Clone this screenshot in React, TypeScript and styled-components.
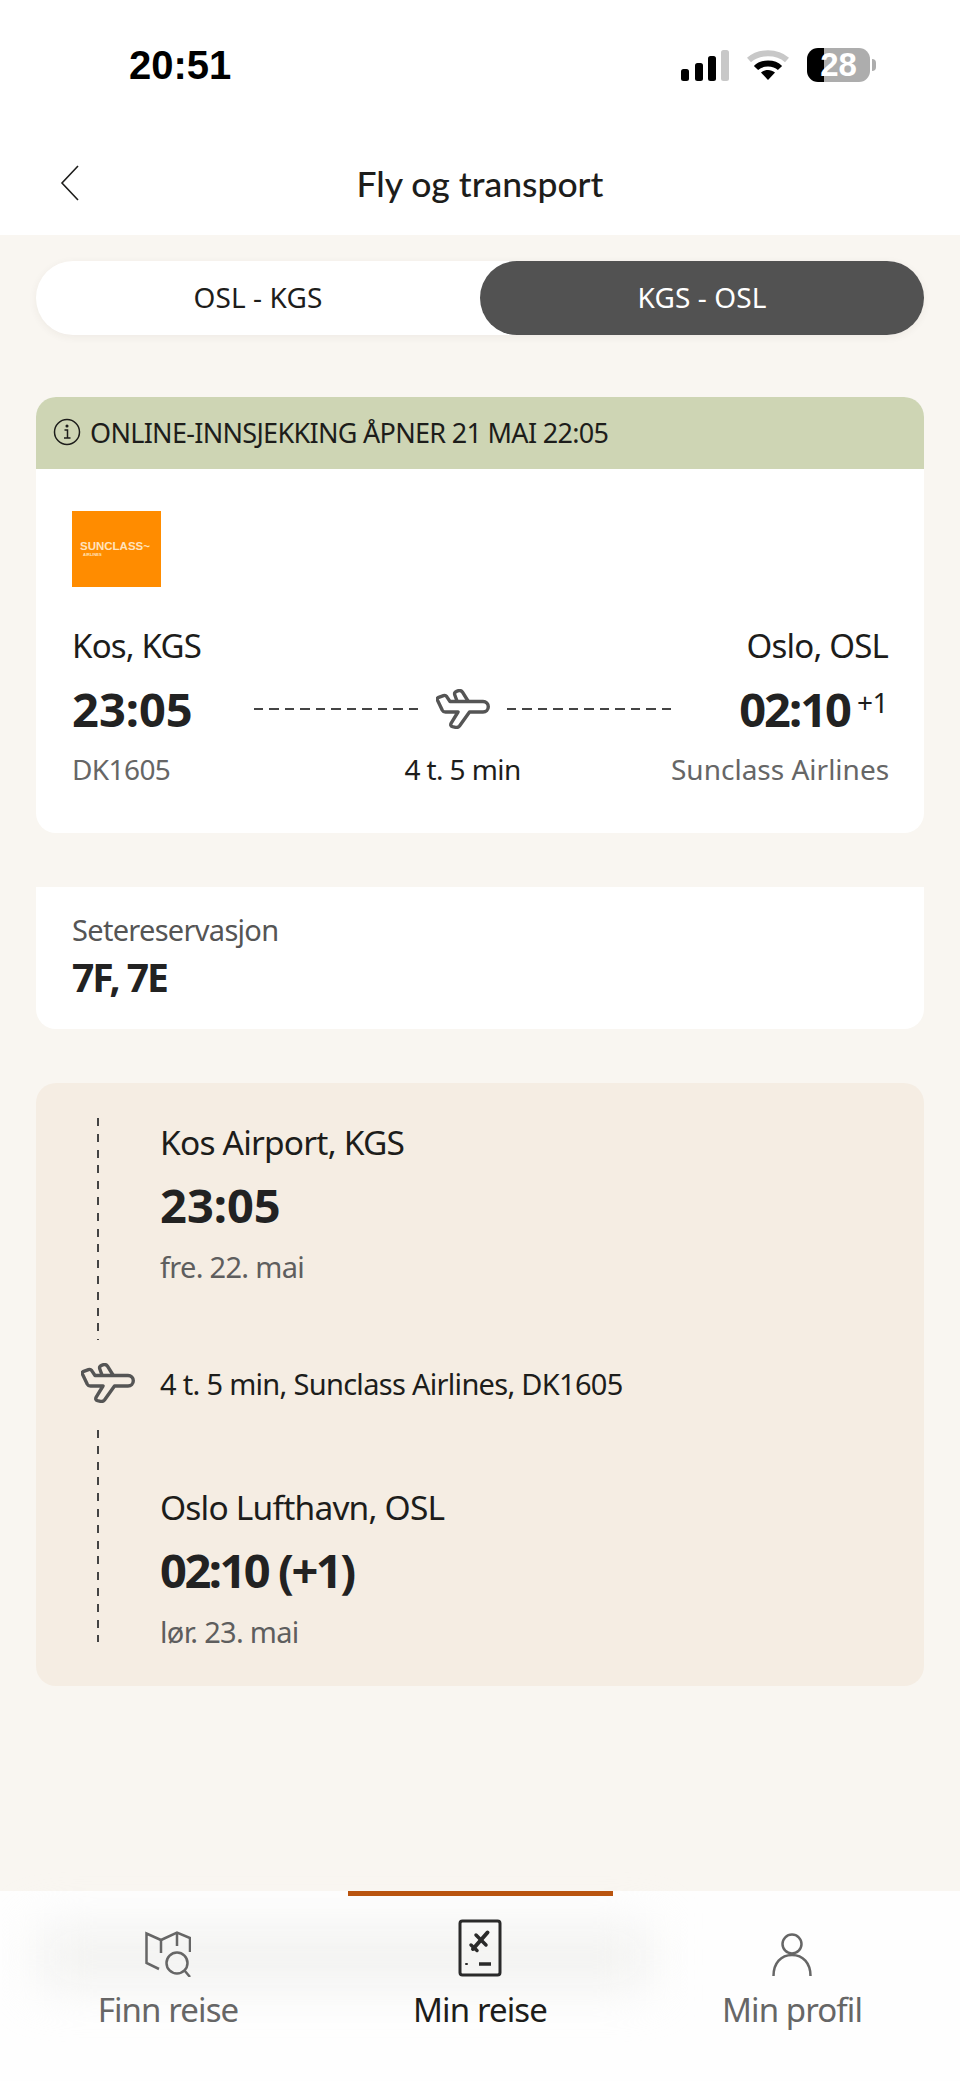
import React from "react";
import styled, { createGlobalStyle } from "styled-components";

const BODY_FONT = `"Noto Sans", "Open Sans", sans-serif`;
const TITLE_FONT = `Lato, "Noto Sans", sans-serif`;

const GlobalStyle = createGlobalStyle`
  html, body {
    margin: 0;
    padding: 0;
    background: #f9f6f1;
  }
  * {
    box-sizing: border-box;
  }
`;

const Page = styled.div`
  width: 960px;
  height: 2081px;
  display: flex;
  flex-direction: column;
  overflow: hidden;
  background: #f9f6f1;
  color: #1d1d1b;
  font-family: ${BODY_FONT};
`;

const Header = styled.header`
  height: 235px;
  flex: none;
  background: #fff;
`;

const StatusBar = styled.div`
  height: 130px;
  display: flex;
  align-items: center;
  justify-content: space-between;
  padding: 0 90px 0 129px;
`;

const Clock = styled.span`
  font-family: "Liberation Sans", Arial, sans-serif;
  font-size: 40px;
  font-weight: 700;
  color: #000;
`;

const StatusIcons = styled.div`
  display: flex;
  align-items: center;
  gap: 18px;
`;

const Battery = styled.div`
  position: relative;
  width: 63px;
  height: 34px;
  border-radius: 11px;
  background: linear-gradient(90deg, #000 17px, #adadad 17px);
  color: #fff;
  font-family: "Liberation Sans", Arial, sans-serif;
  font-size: 33px;
  font-weight: 700;
  line-height: 34px;
  text-align: center;
  &::after {
    content: "";
    position: absolute;
    right: -6px;
    top: 11px;
    width: 4px;
    height: 12px;
    border-radius: 0 4px 4px 0;
    background: #adadad;
  }
`;

const TitleRow = styled.div`
  height: 105px;
  display: flex;
  align-items: center;
  justify-content: center;
  position: relative;
  padding-top: 1px;
`;

const BackIcon = styled.svg`
  position: absolute;
  left: 60px;
  top: 35px;
`;

const Title = styled.h1`
  margin: 0;
  font-family: ${TITLE_FONT};
  font-size: 35.5px;
  font-weight: 500;
  color: #1d1d1b;
`;

const Main = styled.main`
  flex: 1;
  display: flex;
  flex-direction: column;
  padding: 26px 36px 0;
`;

const Tabs = styled.div`
  height: 74px;
  display: grid;
  grid-template-columns: 1fr 1fr;
  border-radius: 37px;
  background: #fff;
  box-shadow: 0 2px 8px rgba(60, 50, 30, 0.06);
  margin-bottom: 62px;
`;

const RouteTab = styled.div<{ $active?: boolean }>`
  display: flex;
  align-items: center;
  justify-content: center;
  border-radius: 37px;
  padding-bottom: 2px;
  font-size: 28px;
  letter-spacing: 0.1px;
  background: ${(p) => (p.$active ? "#525252" : "transparent")};
  color: ${(p) => (p.$active ? "#fff" : "#1d1d1b")};
`;

const Card = styled.section`
  background: #fff;
  border-radius: 20px;
  overflow: hidden;
  margin-bottom: 54px;
`;

const Banner = styled.div`
  height: 72px;
  display: flex;
  align-items: center;
  gap: 9px;
  padding: 0 0 2px 17px;
  background: #ced5b4;
  font-size: 27px;
  letter-spacing: -0.7px;
  color: #1d1d1b;
`;

const FlightBody = styled.div`
  padding: 42px 36px 42px;
`;

const Logo = styled.div`
  width: 89px;
  height: 76px;
  display: flex;
  flex-direction: column;
  justify-content: center;
  padding-left: 8px;
  background: #ff8c00;
  color: #ffe3bd;
  font-family: "Liberation Sans", Arial, sans-serif;
  font-weight: 700;
  margin-bottom: 35px;
`;

const LogoName = styled.span`
  font-size: 11.5px;
  line-height: 11px;
  white-space: nowrap;
`;

const LogoSub = styled.span`
  font-size: 4px;
  line-height: 5px;
  padding-left: 3px;
`;

const Cities = styled.div`
  display: flex;
  justify-content: space-between;
  font-size: 33px;
  line-height: 48px;
  letter-spacing: -0.8px;
  margin-bottom: 9px;
`;

const FlightGrid = styled.div`
  display: grid;
  grid-template-columns: 182px 417px 217px;
  row-gap: 8px;
`;

const BigTime = styled.span<{ $tight?: boolean }>`
  font-size: 47px;
  font-weight: 700;
  line-height: 60px;
  letter-spacing: ${(p) => (p.$tight ? "-2px" : "0")};
  color: #222;
`;

const Route = styled.div`
  display: flex;
  align-items: center;
  gap: 17px;
`;

const DashLine = styled.div`
  flex: 1;
  height: 2px;
  background: repeating-linear-gradient(90deg, #444 0 9px, transparent 9px 15.5px);
`;

const ArrivalCell = styled.div`
  display: flex;
  justify-content: flex-end;
  align-items: flex-start;
  gap: 7px;
`;

const PlusDay = styled.span`
  font-size: 28px;
  line-height: 46px;
  letter-spacing: -0.5px;
`;

const Meta = styled.div<{ $align?: string; $dark?: boolean; $loose?: boolean }>`
  font-size: 28px;
  line-height: 44px;
  letter-spacing: ${(p) => (p.$loose ? "0" : "-0.6px")};
  white-space: nowrap;
  text-align: ${(p) => p.$align || "left"};
  color: ${(p) => (p.$dark ? "#1d1d1b" : "#666")};
`;

const SeatCard = styled(Card)`
  padding: 23px 36px 25px;
  border-radius: 0 0 20px 20px;
`;

const SeatLabel = styled.div`
  font-size: 29px;
  line-height: 40px;
  letter-spacing: -0.7px;
  color: #555;
`;

const SeatValue = styled.div`
  font-size: 39px;
  font-weight: 700;
  line-height: 54px;
  letter-spacing: -2px;
  color: #222;
`;

const Timeline = styled.section`
  background: #f5ede3;
  border-radius: 20px;
  padding: 35px 0 31px;
`;

const Stop = styled.div`
  display: flex;
`;

const Rail = styled.div<{ $trim?: number }>`
  width: 124px;
  flex: none;
  margin-bottom: ${(p) => p.$trim || 0}px;
  background: repeating-linear-gradient(180deg, #444 0 8px, transparent 8px 15.8px) no-repeat 61px 0 / 2px 100%;
`;

const StopBody = styled.div<{ $top?: number; $bottom?: number }>`
  padding-top: ${(p) => p.$top || 0}px;
  padding-bottom: ${(p) => p.$bottom || 0}px;
`;

const StopName = styled.div`
  font-size: 33.5px;
  line-height: 48px;
  letter-spacing: -0.8px;
`;

const StopTime = styled.div<{ $tight?: boolean }>`
  font-size: 47px;
  font-weight: 700;
  line-height: 78px;
  letter-spacing: ${(p) => (p.$tight ? "-2.5px" : "0")};
  color: #222;
`;

const StopDate = styled.div`
  font-size: 29px;
  line-height: 46px;
  letter-spacing: -0.7px;
  color: #5e5e5e;
`;

const Leg = styled.div`
  height: 90px;
  display: flex;
  align-items: center;
  padding-bottom: 4px;
  font-size: 29px;
  letter-spacing: -0.7px;
`;

const LegIcon = styled.div`
  width: 124px;
  flex: none;
  display: flex;
  justify-content: flex-start;
  padding-left: 45px;
`;

const TabBar = styled.nav`
  position: relative;
  height: 190px;
  flex: none;
  display: grid;
  grid-template-columns: repeat(3, 1fr);
  padding: 0 12px;
  background: #fefefe;
`;

const BarShade = styled.div`
  position: absolute;
  left: 40px;
  top: 38px;
  width: 610px;
  height: 56px;
  background: #f1f1ef;
  filter: blur(24px);
`;

const NavItem = styled.div<{ $active?: boolean }>`
  position: relative;
  display: flex;
  flex-direction: column;
  align-items: center;
  font-size: 33px;
  letter-spacing: -0.9px;
  color: ${(p) => (p.$active ? "#1d1d1b" : "#666")};
`;

const Indicator = styled.div<{ $active?: boolean }>`
  width: 265px;
  height: 5px;
  background: ${(p) => (p.$active ? "#b9540f" : "transparent")};
`;

const NavIconBox = styled.div`
  height: 58px;
  margin-top: 23px;
  display: flex;
  align-items: flex-end;
`;

const NavLabel = styled.span`
  margin-top: 11px;
  line-height: 44px;
`;

const PlaneIcon = ({ width, color = "#555" }: { width: number; color?: string }) => (
  <svg width={width} height={(width * 40) / 54} viewBox="0 0 54 40" fill="none" stroke={color} strokeWidth="3.400" strokeLinejoin="round" strokeLinecap="round">
    <path d="M2 8.7 7.500 6.600c1.300-.5 2.400-.1 3.200 1L14 12.500h33c3 0 5.300 2.300 5.300 5.300S50 23 47 23H33.500L23.500 37c-1 1.300-2.300 1.700-4 1.300l-3-.7c-1.700-.5-2.200-1.800-1.300-3.400L22 23H9.500c-1.500 0-2.500-.5-3.200-1.800L1.500 11.300C1 10.200 1.100 9.200 2 8.700Z" />
    <path d="M21 12 18.800 6c-.6-1.700 0-3 1.700-3.600l2-.7c1.800-.5 3 0 4 1.500L32 12" />
  </svg>
);

const InfoIcon = () => (
  <svg width="28" height="28" viewBox="0 0 28 28" fill="none" stroke="#1d1d1b" strokeWidth="1.500">
    <circle cx="14" cy="14" r="12.500" />
    <path d="M11.500 12H14.500V20M11 20H17.500" />
    <circle cx="14" cy="8" r="0.800" fill="#1d1d1b" />
  </svg>
);

const MapSearchIcon = () => (
  <svg width="46" height="46" viewBox="0 0 46 46" fill="none" stroke="#666" strokeWidth="2.500">
    <path d="M14 38 1.500 32V2.500L16 9 32 1.500 45 7V21" />
    <path d="M16 9V22M32 1.500V15" />
    <circle cx="32" cy="32" r="10.500" />
    <path d="M39.500 39.500 45 46" />
  </svg>
);

const TripIcon = () => (
  <svg width="44" height="58" viewBox="0 0 44 58" fill="none" stroke="#2a2a2a">
    <rect x="2" y="2" width="40" height="54" rx="2.500" strokeWidth="3" />
    <path d="M29.500 13.500 15 30" strokeWidth="4" strokeLinecap="round" />
    <path d="M18 16 28 26M13 26 19 31.500" strokeWidth="3.500" strokeLinecap="round" />
    <path d="M8.500 44V46" strokeWidth="2.500" />
    <path d="M21 45H33" strokeWidth="3.500" />
  </svg>
);

const ProfileIcon = () => (
  <svg width="40" height="44" viewBox="0 0 40 44" fill="none" stroke="#666" strokeWidth="2.500">
    <circle cx="20" cy="11" r="9.500" />
    <path d="M1.500 43C1.500 30 9 22 20 22S38.500 30 38.500 43" />
  </svg>
);

export default function App() {
  return (
    <Page>
      <GlobalStyle />
      <Header>
        <StatusBar>
          <Clock>20:51</Clock>
          <StatusIcons>
            <svg width="48" height="32" viewBox="0 0 48 32">
              <rect x="0" y="20" width="8" height="12" rx="2.500" fill="#000" />
              <rect x="14" y="14" width="8" height="18" rx="2.500" fill="#000" />
              <rect x="27" y="7" width="8" height="25" rx="2.500" fill="#000" />
              <rect x="40" y="1" width="8" height="31" rx="2.500" fill="#c8c8c8" />
            </svg>
            <svg width="42" height="32" viewBox="0 0 42 32" fill="none">
              <path d="M2 11C12 2 30 2 40 11" stroke="#c8c8c8" strokeWidth="6" />
              <path d="M9 19C15 13 27 13 33 19" stroke="#000" strokeWidth="6" />
              <path d="M14 23.500C18 20 24 20 28 23.500L21 31Z" fill="#000" />
            </svg>
            <Battery>28</Battery>
          </StatusIcons>
        </StatusBar>
        <TitleRow>
          <BackIcon width="20" height="36" viewBox="0 0 20 36" fill="none" stroke="#1d1d1b" strokeWidth="1.600">
            <path d="M18 1 2 18 18 35" />
          </BackIcon>
          <Title>Fly og transport</Title>
        </TitleRow>
      </Header>

      <Main>
        <Tabs>
          <RouteTab>OSL - KGS</RouteTab>
          <RouteTab $active>KGS - OSL</RouteTab>
        </Tabs>

        <Card>
          <Banner>
            <InfoIcon />
            ONLINE-INNSJEKKING ÅPNER 21 MAI 22:05
          </Banner>
          <FlightBody>
            <Logo>
              <LogoName>SUNCLASS~</LogoName>
              <LogoSub>AIRLINES</LogoSub>
            </Logo>
            <Cities>
              <span>Kos, KGS</span>
              <span>Oslo, OSL</span>
            </Cities>
            <FlightGrid>
              <BigTime>23:05</BigTime>
              <Route>
                <DashLine />
                <PlaneIcon width={54} />
                <DashLine />
              </Route>
              <ArrivalCell>
                <BigTime $tight>02:10</BigTime>
                <PlusDay>+1</PlusDay>
              </ArrivalCell>
              <Meta>DK1605</Meta>
              <Meta $align="center" $dark>4 t. 5 min</Meta>
              <Meta $align="right" $loose>Sunclass Airlines</Meta>
            </FlightGrid>
          </FlightBody>
        </Card>

        <SeatCard>
          <SeatLabel>Setereservasjon</SeatLabel>
          <SeatValue>7F, 7E</SeatValue>
        </SeatCard>

        <Timeline>
          <Stop>
            <Rail />
            <StopBody $bottom={50}>
              <StopName>Kos Airport, KGS</StopName>
              <StopTime>23:05</StopTime>
              <StopDate>fre. 22. mai</StopDate>
            </StopBody>
          </Stop>
          <Leg>
            <LegIcon>
              <PlaneIcon width={54} />
            </LegIcon>
            4 t. 5 min, Sunclass Airlines, DK1605
          </Leg>
          <Stop>
            <Rail $trim={13} />
            <StopBody $top={53}>
              <StopName>Oslo Lufthavn, OSL</StopName>
              <StopTime $tight>02:10 (+1)</StopTime>
              <StopDate>lør. 23. mai</StopDate>
            </StopBody>
          </Stop>
        </Timeline>
      </Main>

      <TabBar>
        <BarShade />
        <NavItem>
          <Indicator />
          <NavIconBox><MapSearchIcon /></NavIconBox>
          <NavLabel>Finn reise</NavLabel>
        </NavItem>
        <NavItem $active>
          <Indicator $active />
          <NavIconBox><TripIcon /></NavIconBox>
          <NavLabel>Min reise</NavLabel>
        </NavItem>
        <NavItem>
          <Indicator />
          <NavIconBox><ProfileIcon /></NavIconBox>
          <NavLabel>Min profil</NavLabel>
        </NavItem>
      </TabBar>
    </Page>
  );
}
